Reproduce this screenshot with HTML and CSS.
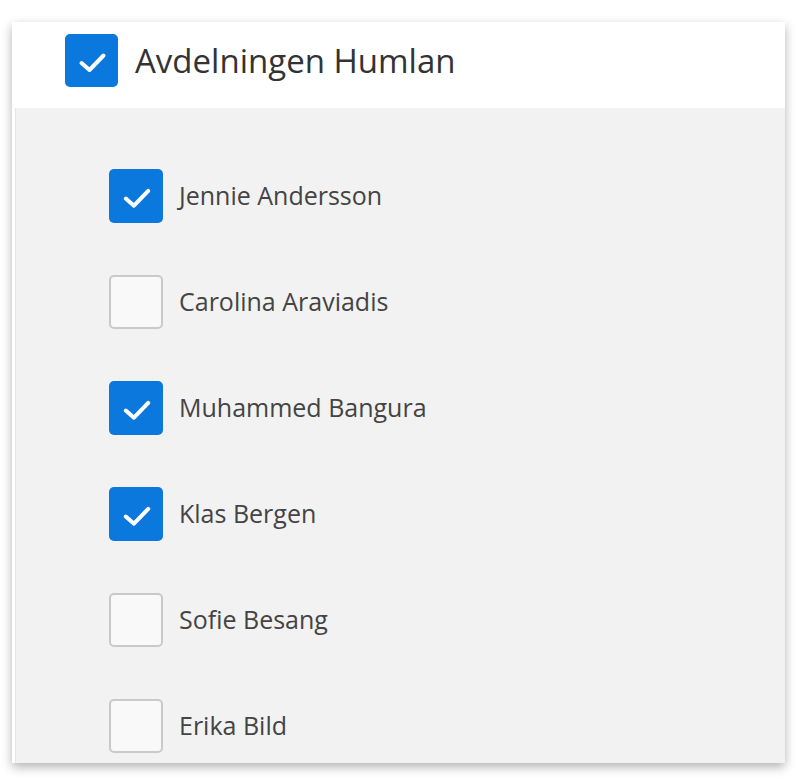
FILE: index.html
```html
<!DOCTYPE html>
<html lang="sv">
<head>
    <meta charset="UTF-8">
    <meta name="viewport" content="width=device-width, initial-scale=1.0">
    <title>Avdelningen Humlan</title>
    <link rel="stylesheet" href="styles.css">
</head>
<body>
    <div class="card">
        <div class="group-header">
            <span class="box checked">
                <svg viewBox="0 0 53 53"><path d="M16.5 29 L24.5 36 L38.5 21.5"/></svg>
            </span>
            <h1 class="group-title">Avdelningen Humlan</h1>
        </div>

        <ul class="member-list">
            <li class="member">
                <span class="box checked"><svg viewBox="0 0 53 53"><path d="M16.5 29 L24.5 36 L38.5 21.5"/></svg></span>
                <span class="member-name">Jennie Andersson</span>
            </li>
            <li class="member">
                <span class="box"></span>
                <span class="member-name">Carolina Araviadis</span>
            </li>
            <li class="member">
                <span class="box checked"><svg viewBox="0 0 53 53"><path d="M16.5 29 L24.5 36 L38.5 21.5"/></svg></span>
                <span class="member-name">Muhammed Bangura</span>
            </li>
            <li class="member">
                <span class="box checked"><svg viewBox="0 0 53 53"><path d="M16.5 29 L24.5 36 L38.5 21.5"/></svg></span>
                <span class="member-name">Klas Bergen</span>
            </li>
            <li class="member">
                <span class="box"></span>
                <span class="member-name">Sofie Besang</span>
            </li>
            <li class="member">
                <span class="box"></span>
                <span class="member-name">Erika Bild</span>
            </li>
        </ul>
    </div>
</body>
</html>
```

FILE: styles.css
```css
:root {
    --blue: #0a78dc;
    --text-color: #3a3a3a;
    --list-bg: #f2f2f2;
}

body {
    margin: 0;
    padding-top: 22px;
    height: 783px;
    box-sizing: border-box;
    overflow: hidden;
    background: #fff;
    font-family: 'Open Sans', 'Noto Sans', sans-serif;
    color: var(--text-color);
}

.card {
    margin-left: 12px;
    width: 773px;
    height: 741px;
    overflow: hidden;
    display: flex;
    flex-direction: column;
    background: #fff;
    box-shadow: 0 4px 10px rgba(0, 0, 0, 0.3);
}

.group-header {
    display: flex;
    align-items: center;
    gap: 17px;
    height: 86px;
    flex-shrink: 0;
    padding-left: 53px;
    padding-bottom: 9px;
    box-sizing: border-box;
}

.group-title {
    margin: 0;
    font-size: 33px;
    font-weight: 500;
    color: #333;
}

.box {
    width: 53px;
    height: 53px;
    flex-shrink: 0;
    box-sizing: border-box;
    border-radius: 5px;
    border: 2px solid #c9c9c9;
    background: #f9f9f9;
}

.box.checked {
    border: none;
    background: var(--blue);
}

.box svg {
    display: block;
    width: 53px;
    height: 53px;
}

.box svg path {
    fill: none;
    stroke: #fff;
    stroke-width: 4;
    stroke-linecap: round;
    stroke-linejoin: round;
}

.member-list {
    list-style: none;
    flex: 1;
    min-height: 0;
    margin: 0 0 0 3px;
    padding: 61px 0 0 93px;
    border-left: 1px solid #e4e4ec;
    background: var(--list-bg);
    display: flex;
    flex-direction: column;
    gap: 52px;
}

.member {
    display: flex;
    align-items: center;
    gap: 16px;
    height: 54px;
    flex-shrink: 0;
}

.member .box,
.member .box svg {
    width: 54px;
    height: 54px;
}

.member-name {
    font-size: 25px;
    color: #444;
    margin-top: -2px;
}
```
